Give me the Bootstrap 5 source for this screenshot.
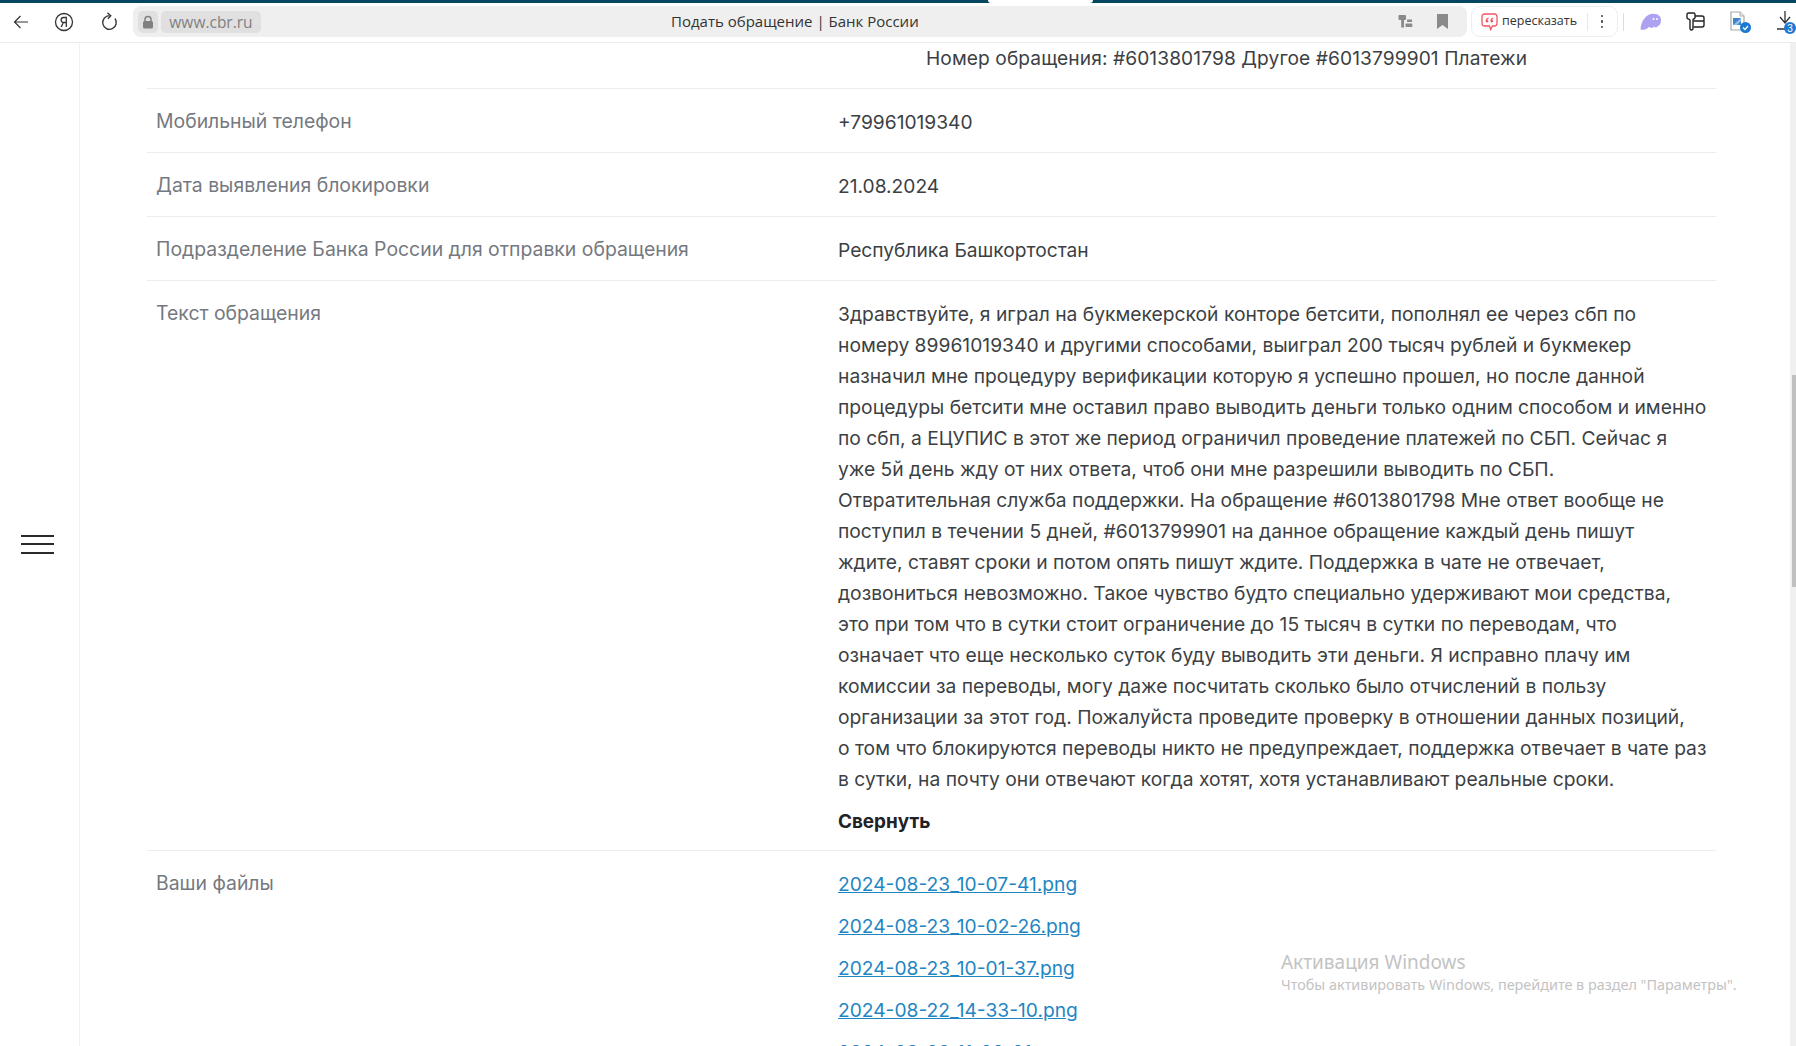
<!DOCTYPE html>
<html lang="ru">
<head>
<meta charset="utf-8">
<title>Подать обращение | Банк России</title>
<link href="https://cdn.jsdelivr.net/npm/bootstrap@5.3.0/dist/css/bootstrap.min.css" rel="stylesheet">
<style>
html,body{height:100%;overflow:hidden;background:#fff}
body{font-family:Inter,"Noto Sans",sans-serif;color:#3c3f44}
.stage{height:1046px;display:flex;flex-direction:column;position:relative;overflow:hidden}
.tabstrip{height:3px;flex:none;background:#06475f;display:flex}
.tabgap{width:105px;margin-left:988px;background:#fff;border-radius:0 0 5px 5px}
.chrome{height:40px;flex:none;background:#fff;border-bottom:1px solid #ececec;display:flex;align-items:center;padding-bottom:2px;font-family:"Open Sans",sans-serif}
.navicon{width:44px;flex:none;display:flex;justify-content:center;align-items:center}
.navicon:first-child{width:42px}
.navicon:nth-child(3){width:47px}
.omnibox{height:31px;width:1334px;background:#efefef;border-radius:8px;display:flex;align-items:center;padding:0 4px 0 5px;position:relative}
.lockbox{width:20px;height:22px;background:#e0e0e0;border-radius:5px;display:flex;align-items:center;justify-content:center;margin-right:3px}
.hostbox{height:22px;width:100px;background:#e0e0e0;border-radius:5px;color:#808080;font-size:15.5px;line-height:22px;text-align:center}
.pagetitle{position:absolute;left:538px;top:0;line-height:31px;font-size:15px;color:#333}
.omniright{margin-left:auto;display:flex;align-items:center;gap:24px;padding-right:15px}
.summary{width:147px;height:31px;margin-left:4px;border:1px solid #eee;border-radius:9px;display:flex;align-items:center;padding:0 9px;font-size:12.5px;color:#333;flex:none}
.summary svg{flex:none}
.sumlabel{margin-left:4px;white-space:nowrap}
.sumsep{width:1px;height:18px;background:#e8e8e8;margin-left:10px}
.sumdots{margin-left:13px;display:flex;flex-direction:column;gap:3px}
.sumdots i{display:block;width:2.4px;height:2.4px;border-radius:50%;background:#444}
.chromesep{width:1px;height:18px;background:#ddd;margin-left:5px}
.tools{display:flex;align-items:center;flex:1;overflow:hidden}
.tool{flex:none;display:flex}
.mainarea{flex:1;display:flex;min-height:0}
.sidenav{width:80px;flex:none;border-right:1px solid #f0f0f0;display:flex;align-items:center;padding-left:21px}
.burger{width:33px;display:flex;flex-direction:column;gap:6.5px;margin-top:-1px}
.burger i{display:block;height:2px;background:#2a2a2a}
.content{flex:1;padding:0 74px 0 67px;min-width:0;overflow:hidden}
.datarow{display:flex;border-bottom:1px solid #ececec}
.rowtext{line-height:31px;padding-top:17.5px;padding-bottom:14px}
.rowlabel{width:691px;flex:none;padding-left:9px;padding-top:17px;color:#75797f;font-size:19.4px}
.rowvalue{flex:1;min-width:0;font-size:19.2px}
.simple .rowvalue{padding-top:18px;padding-bottom:14px}
.headrow{height:46px;padding-left:779px;line-height:30px;font-size:19.15px;letter-spacing:.1px;white-space:nowrap}
.simple{height:64px}
.longtext{padding-bottom:10px;font-size:19.25px;line-height:31.06px;white-space:nowrap}
.collapser{font-weight:700;color:#1f2226;font-size:18.9px;line-height:31px;padding-bottom:13.5px}
.filelink{display:block;color:#1f86c3;font-size:19.2px;line-height:31px;margin-bottom:11px;white-space:nowrap}
.scrolltrack{width:6px;flex:none;background:#f0f0f0;position:relative}
.scrollthumb{position:absolute;right:0;top:332px;width:4px;height:212px;background:#c0c0c0}
.watermark{position:absolute;left:1281px;top:950px;color:#c3c3c3;font-family:"Noto Sans",sans-serif;white-space:nowrap}
.wmtitle{font-size:19px;line-height:25px}
.wmsub{font-size:14.4px;line-height:20px}
</style>
</head>
<body>
<div class="stage">
  <div class="tabstrip"><div class="tabgap"></div></div>
  <div class="chrome">
    <div class="navicon"><svg width="16" height="14" viewBox="0 0 16 14" fill="none" stroke="#333" stroke-width="1.2"><path d="M15 7H1.500M7.500 1 1.500 7l6 6"/></svg></div>
    <div class="navicon"><svg width="20" height="20" viewBox="0 0 20 20" fill="none" stroke="#333" stroke-width="1.3"><circle cx="10" cy="10" r="8.500"/><path d="M12.300 15V5.500H9.600a2.500 2.500 0 0 0 0 5h2.700M9.400 10.500 7.200 15"/></svg></div>
    <div class="navicon"><svg width="18" height="20" viewBox="0 0 18 20" fill="none" stroke="#333" stroke-width="1.3"><path d="M14 6.500a6.800 6.800 0 1 1-5.500-2.800"/><path d="M6.500 .8 9.800 3.700 6.800 6.800"/></svg></div>
    <div class="omnibox">
      <div class="lockbox"><svg width="12" height="14" viewBox="0 0 12 14"><path d="M3 6V4.500a3 3 0 0 1 6 0V6" fill="none" stroke="#808080" stroke-width="1.500"/><rect x="1" y="6" width="10" height="7.500" rx="1.500" fill="#808080"/></svg></div>
      <div class="hostbox">www.cbr.ru</div>
      <div class="pagetitle">Подать обращение | Банк России</div>
      <div class="omniright">
        <svg width="15" height="15" viewBox="0 0 15 15" fill="#8a8a8a"><path d="M1.500 1h5.500a1 1 0 0 1 1 1v3a1 1 0 0 1-1 1H6v7.500H3.200V6H1.500a1 1 0 0 1-1-1V2a1 1 0 0 1 1-1z"/><rect x="9" y="5.500" width="5" height="2.600" rx=".5"/><rect x="7.500" y="9.500" width="6.800" height="3.500" rx=".6"/></svg>
        <svg width="11" height="15" viewBox="0 0 11 15" fill="#8a8a8a"><path d="M0 0h11v15L5.500 11 0 15z"/></svg>
      </div>
    </div>
    <div class="summary">
      <svg width="17" height="18" viewBox="0 0 17 18"><path d="M3.500 1h10A2.500 2.500 0 0 1 16 3.500v7a2.500 2.500 0 0 1-2.500 2.500h-2l-1.800 3.500-1.200-3.500h-5A2.500 2.500 0 0 1 1 10.500v-7A2.500 2.500 0 0 1 3.500 1z" fill="#fff" stroke="#f2555f" stroke-width="1.300"/><path d="M7.600 4.600c-1.800.6-3 1.700-3 3.400a1.400 1.400 0 1 0 2.700-.5c-.4-.4-.8-.4-1.100-.4.1-.8.700-1.400 1.500-1.700zM12.400 4.600c-1.800.6-3 1.700-3 3.400a1.400 1.400 0 1 0 2.700-.5c-.4-.4-.8-.4-1.100-.4.1-.8.700-1.400 1.500-1.700z" fill="#f2555f"/></svg>
      <span class="sumlabel">пересказать</span>
      <span class="sumsep"></span>
      <span class="sumdots"><i></i><i></i><i></i></span>
    </div>
    <div class="chromesep"></div>
    <div class="tools">
      <span class="tool ms-3"><svg width="22" height="18" viewBox="0 0 22 18"><path d="M.5 16.500C1 8 6 .8 13.500.8c5 0 7.500 2.800 7.500 6.700 0 3-1.500 5-2.800 5.200-1 2-3 2.200-4 .8-2 2.200-4 1.500-5 .2-2 2.300-5.500 3.800-8.700 2.800z" fill="#ada2f0"/><circle cx="13.500" cy="6" r="1" fill="#fff"/><circle cx="17" cy="6" r="1" fill="#fff"/></svg></span>
      <span class="tool ms-4"><svg width="19" height="19" viewBox="0 0 19 19" fill="none" stroke="#222" stroke-width="1.400"><path d="M2.500 1h5a1.500 1.500 0 0 1 1.500 1.500v3a1.500 1.500 0 0 1-1.500 1.500L7 8v8.500a1.500 1.500 0 0 1-3 0V8l-1.500-1A1.500 1.500 0 0 1 1 5.500v-3A1.500 1.500 0 0 1 2.500 1z"/><path d="M9 4h7a2 2 0 0 1 2 2v7a2 2 0 0 1-2 2H7.500M7.500 9H18"/></svg></span>
      <span class="tool position-relative ms-4"><svg width="23" height="24" viewBox="0 0 23 24"><path d="M2 2h9l4 4v14H2z" fill="#fff" stroke="#aaa" stroke-width="1.200"/><path d="M11 2v4h4" fill="#eee" stroke="#aaa"/><rect x="4" y="8" width="8" height="7" fill="#3f83c9"/><path d="M4 15l8-7v3l-4 4z" fill="#8fc0ee"/><circle cx="16.500" cy="17.500" r="5.500" fill="#1d78d2"/><path d="m14 17.500 2 2 3-3.500" fill="none" stroke="#fff" stroke-width="1.300"/></svg></span>
      <span class="tool position-relative ms-4"><svg width="20" height="26" viewBox="0 0 20 26"><path d="M9 2v11M4 8l5 6 5-6M1 20h9" fill="none" stroke="#333" stroke-width="1.300"/><circle cx="14" cy="19" r="6" fill="#1d78d2"/><text x="14" y="23" text-anchor="middle" font-size="10" font-family="Liberation Sans" fill="#fff">3</text></svg></span>
    </div>
  </div>
  <div class="mainarea">
    <nav class="sidenav"><div class="burger"><i></i><i></i><i></i></div></nav>
    <main class="content">
      <div class="datarow headrow">Номер обращения: #6013801798 Другое #6013799901 Платежи</div>
      <div class="datarow simple"><div class="rowlabel rowtext">Мобильный телефон</div><div class="rowvalue rowtext">+79961019340</div></div>
      <div class="datarow simple"><div class="rowlabel rowtext">Дата выявления блокировки</div><div class="rowvalue rowtext">21.08.2024</div></div>
      <div class="datarow simple"><div class="rowlabel rowtext">Подразделение Банка России для отправки обращения</div><div class="rowvalue rowtext">Республика Башкортостан</div></div>
      <div class="datarow">
        <div class="rowlabel rowtext">Текст обращения</div>
        <div class="rowvalue">
          <div class="rowtext longtext">Здравствуйте, я играл на букмекерской конторе бетсити, пополнял ее через сбп по<br>номеру 89961019340 и другими способами, выиграл 200 тысяч рублей и букмекер<br>назначил мне процедуру верификации которую я успешно прошел, но после данной<br>процедуры бетсити мне оставил право выводить деньги только одним способом и именно<br>по сбп, а ЕЦУПИС в этот же период ограничил проведение платежей по СБП. Сейчас я<br>уже 5й день жду от них ответа, чтоб они мне разрешили выводить по СБП.<br>Отвратительная служба поддержки. На обращение #6013801798 Мне ответ вообще не<br>поступил в течении 5 дней, #6013799901 на данное обращение каждый день пишут<br>ждите, ставят сроки и потом опять пишут ждите. Поддержка в чате не отвечает,<br>дозвониться невозможно. Такое чувство будто специально удерживают мои средства,<br>это при том что в сутки стоит ограничение до 15 тысяч в сутки по переводам, что<br>означает что еще несколько суток буду выводить эти деньги. Я исправно плачу им<br>комиссии за переводы, могу даже посчитать сколько было отчислений в пользу<br>организации за этот год. Пожалуйста проведите проверку в отношении данных позиций,<br>о том что блокируются переводы никто не предупреждает, поддержка отвечает в чате раз<br>в сутки, на почту они отвечают когда хотят, хотя устанавливают реальные сроки.</div>
          <div class="collapser">Свернуть</div>
        </div>
      </div>
      <div class="d-flex">
        <div class="rowlabel rowtext">Ваши файлы</div>
        <div class="rowvalue rowtext">
          <a class="filelink" href="#">2024-08-23_10-07-41.png</a>
          <a class="filelink" href="#">2024-08-23_10-02-26.png</a>
          <a class="filelink" href="#">2024-08-23_10-01-37.png</a>
          <a class="filelink" href="#">2024-08-22_14-33-10.png</a>
          <a class="filelink" href="#">2024-08-22_11-22-21.png</a>
        </div>
      </div>
    </main>
    <div class="scrolltrack"><div class="scrollthumb"></div></div>
  </div>
  <div class="watermark"><div class="wmtitle">Активация Windows</div><div class="wmsub">Чтобы активировать Windows, перейдите в раздел "Параметры".</div></div>
</div>
<script src="https://cdn.jsdelivr.net/npm/bootstrap@5.3.0/dist/js/bootstrap.bundle.min.js"></script>
</body>
</html>
